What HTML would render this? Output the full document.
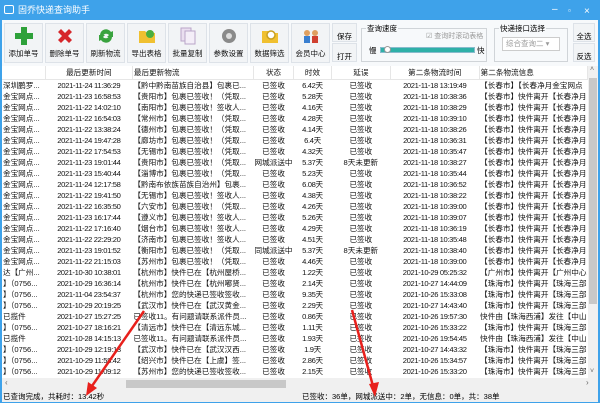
<!DOCTYPE html>
<html><head><meta charset="utf-8">
<style>
*{margin:0;padding:0;box-sizing:border-box}
body{width:600px;height:403px;overflow:hidden;background:#fff;font-family:"Liberation Sans","Noto Sans CJK SC",sans-serif;position:relative}
.title{position:absolute;left:0;top:0;width:600px;height:20px;background:#3ea2ea;color:#fff;font-size:9px;line-height:20px;padding-left:18px}
.title .ic{position:absolute;left:4px;top:5px;width:10px;height:9px;border:1.5px solid #fff;border-radius:2px}
.wb{position:absolute;top:3px;color:#fff;font-size:10px}
.frame{position:absolute;left:0;top:20px;width:600px;height:383px;border-left:2px solid #3ea2ea;border-right:2px solid #3ea2ea}
.tb{position:absolute;top:20px;left:2px;width:596px;height:46px;background:#f7f9fb}
.btn{position:absolute;top:23px;width:39px;height:40px;background:#f2f4f6;border:1px solid #dde2e8;font-size:7.5px;text-align:center;color:#111}
.btn .lb{position:absolute;bottom:3px;left:0;width:100%}
.btn svg{position:absolute;left:10px;top:3px}
.sb{position:absolute;left:332px;width:25px;height:19px;background:#f2f4f6;border:1px solid #dde2e8;font-size:7.5px;text-align:center;padding-top:7px}
.grp{position:absolute;border:1px solid #d0d4d8;font-size:7.5px}
.grp .gt{position:absolute;top:-6px;left:4px;background:#f7f9fb;padding:0 1px}
.grid{position:absolute;left:2px;top:66px;width:586px;height:312px;overflow:hidden;background:#fff}
table{border-collapse:collapse;table-layout:fixed;font-size:7.6px;color:#111;font-family:"Liberation Sans","Noto Sans CJK SC",sans-serif}
td,th{height:11px;line-height:11px;white-space:nowrap;overflow:hidden;padding:0 1px;font-weight:normal}
th{height:13px;border-right:1px solid #e6e6e6;border-bottom:1px solid #e6e6e6;background:#fff}
td.c{text-align:center}
.n{letter-spacing:-0.35px}
.vs{position:absolute;left:588px;top:66px;width:10px;height:312px;background:#f0f0f0}
.hs{position:absolute;left:2px;top:378px;width:596px;height:12px;background:#f0f0f0}
.status{position:absolute;left:0;top:390px;width:600px;height:13px;background:#f0f0f0;font-size:7.5px;line-height:13px;border-left:2px solid #3ea2ea;border-right:2px solid #3ea2ea;border-bottom:1px solid #3ea2ea}
</style></head><body>
<div class="title"><div class="ic"></div>固乔快递查询助手
<span class="wb" style="left:552px;top:0">–</span><span class="wb" style="left:568px;top:1px;font-size:8px">▫</span><span class="wb" style="left:584px;top:2px">×</span></div>
<div class="frame"></div>
<div class="tb"></div>

<div class="btn" style="left:4px"><svg width="18" height="18"><path d="M6 0h6v6h6v6h-6v6H6v-6H0V6h6z" fill="#2ea13a"/></svg><div class="lb">添加单号</div></div>
<div class="btn" style="left:45px"><svg width="18" height="18"><path d="M2 5l3-3 4 4 4-4 3 3-4 4 4 4-3 3-4-4-4 4-3-3 4-4z" fill="#d6262a"/></svg><div class="lb">删除单号</div></div>
<div class="btn" style="left:86px"><svg width="18" height="18"><path d="M3 8a6 6 0 0 1 11-3l2-1v6h-6l2-2a3.5 3.5 0 0 0-6 1z" fill="#3aa33f"/><path d="M15 10a6 6 0 0 1-11 3l-2 1V8h6l-2 2a3.5 3.5 0 0 0 6-1z" fill="#3aa33f"/></svg><div class="lb">刷新物流</div></div>
<div class="btn" style="left:127px"><svg width="18" height="18"><path d="M1 4h6l2 2h8v10H1z" fill="#f0c030"/><circle cx="12" cy="7" r="4" fill="#4bae3f"/></svg><div class="lb">导出表格</div></div>
<div class="btn" style="left:168px"><svg width="18" height="18"><rect x="2" y="1" width="10" height="13" fill="#eadff0" stroke="#b9a5c8"/><rect x="6" y="4" width="10" height="13" fill="#f4eef8" stroke="#b9a5c8"/></svg><div class="lb">批量复制</div></div>
<div class="btn" style="left:209px"><svg width="18" height="18"><circle cx="9" cy="9" r="7" fill="#8a8a8a"/><circle cx="9" cy="9" r="3" fill="#ddd"/></svg><div class="lb">参数设置</div></div>
<div class="btn" style="left:250px"><svg width="18" height="18"><path d="M1 4h6l2 2h8v10H1z" fill="#f0c030"/><circle cx="10" cy="8" r="4" fill="#fff" stroke="#c9a020" stroke-width="1.5"/></svg><div class="lb">数据筛选</div></div>
<div class="btn" style="left:291px"><svg width="18" height="18"><circle cx="5" cy="6" r="3" fill="#e0a060"/><rect x="2" y="9" width="6" height="7" fill="#3a7fd0"/><circle cx="13" cy="6" r="3" fill="#e0a060"/><rect x="10" y="9" width="6" height="7" fill="#d04030"/></svg><div class="lb">会员中心</div></div>

<div class="sb" style="top:23px">保存</div>
<div class="sb" style="top:43px">打开</div>

<div class="grp" style="left:361px;top:28px;width:126px;height:34px"><span class="gt">查询速度</span>
 <div style="position:absolute;left:8px;top:3px;width:8px;height:8px;border:1px solid #bbb;display:none"></div>
 <span style="position:absolute;left:64px;top:2px;color:#999;font-size:7px">☑ 查询时滚动表格</span>
 <span style="position:absolute;left:7px;top:16px">慢</span>
 <div style="position:absolute;left:18px;top:18px;width:95px;height:6px;background:#2fb0a8;border:1px solid #8bc"></div>
 <div style="position:absolute;left:22px;top:17px;width:7px;height:7px;border-radius:50%;background:#fff;border:1px solid #999"></div>
 <span style="position:absolute;left:115px;top:16px">快</span>
</div>
<div class="grp" style="left:494px;top:28px;width:74px;height:34px"><span class="gt">快递接口选择</span>
 <div style="position:absolute;left:7px;top:8px;width:58px;height:14px;border:1px solid #ccc;background:#fff;color:#999;font-size:7.5px;line-height:12px;padding-left:3px">综合查询二 ▾</div>
</div>
<div class="sb" style="left:573px;top:23px;width:22px">全选</div>
<div class="sb" style="left:573px;top:43px;width:22px">反选</div>

<div class="grid"><table>
<colgroup><col style="width:44px"><col style="width:90px"><col style="width:122px"><col style="width:38px"><col style="width:40px"><col style="width:62px"><col style="width:92px"><col style="width:98px"></colgroup>
<tr><th></th><th>最后更新时间</th><th style="text-align:left">最后更新物流</th><th>状态</th><th>时效</th><th>延误</th><th>第二条物流时间</th><th style="text-align:left">第二条物流信息</th></tr>
<tr><td>深圳鹏罗...</td><td class="c n">2021-11-24 11:36:29</td><td>【黔中黔南苗族自治县】包裹已...</td><td class="c">已签收</td><td class="c n">6.42天</td><td class="c">已签收</td><td class="c n">2021-11-18 13:19:49</td><td>【长春市】【长春净月金宝网点</td></tr>
<tr><td>金宝网点...</td><td class="c n">2021-11-23 16:58:53</td><td>【贵阳市】包裹已签收！（凭取...</td><td class="c">已签收</td><td class="c n">5.28天</td><td class="c">已签收</td><td class="c n">2021-11-18 10:38:36</td><td>【长春市】快件离开【长春净月</td></tr>
<tr><td>金宝网点...</td><td class="c n">2021-11-22 14:02:10</td><td>【南阳市】包裹已签收！签收人...</td><td class="c">已签收</td><td class="c n">4.16天</td><td class="c">已签收</td><td class="c n">2021-11-18 10:38:29</td><td>【长春市】快件离开【长春净月</td></tr>
<tr><td>金宝网点...</td><td class="c n">2021-11-22 16:54:03</td><td>【常州市】包裹已签收！（凭取...</td><td class="c">已签收</td><td class="c n">4.28天</td><td class="c">已签收</td><td class="c n">2021-11-18 10:39:10</td><td>【长春市】快件离开【长春净月</td></tr>
<tr><td>金宝网点...</td><td class="c n">2021-11-22 13:38:24</td><td>【德州市】包裹已签收！（凭取...</td><td class="c">已签收</td><td class="c n">4.14天</td><td class="c">已签收</td><td class="c n">2021-11-18 10:38:26</td><td>【长春市】快件离开【长春净月</td></tr>
<tr><td>金宝网点...</td><td class="c n">2021-11-24 19:47:28</td><td>【廊坊市】包裹已签收！（凭取...</td><td class="c">已签收</td><td class="c n">6.4天</td><td class="c">已签收</td><td class="c n">2021-11-18 10:36:31</td><td>【长春市】快件离开【长春净月</td></tr>
<tr><td>金宝网点...</td><td class="c n">2021-11-22 17:54:53</td><td>【无锡市】包裹已签收！（凭取...</td><td class="c">已签收</td><td class="c n">4.32天</td><td class="c">已签收</td><td class="c n">2021-11-18 10:35:47</td><td>【长春市】快件离开【长春净月</td></tr>
<tr><td>金宝网点...</td><td class="c n">2021-11-23 19:01:44</td><td>【贵阳市】包裹已签收！（凭取...</td><td class="c">网城派送中</td><td class="c n">5.37天</td><td class="c">8天未更新</td><td class="c n">2021-11-18 10:38:27</td><td>【长春市】快件离开【长春净月</td></tr>
<tr><td>金宝网点...</td><td class="c n">2021-11-23 15:40:44</td><td>【淄博市】包裹已签收！（凭取...</td><td class="c">已签收</td><td class="c n">5.23天</td><td class="c">已签收</td><td class="c n">2021-11-18 10:35:44</td><td>【长春市】快件离开【长春净月</td></tr>
<tr><td>金宝网点...</td><td class="c n">2021-11-24 12:17:58</td><td>【黔南布依族苗族自治州】包裹...</td><td class="c">已签收</td><td class="c n">6.08天</td><td class="c">已签收</td><td class="c n">2021-11-18 10:36:52</td><td>【长春市】快件离开【长春净月</td></tr>
<tr><td>金宝网点...</td><td class="c n">2021-11-22 19:41:50</td><td>【无锡市】包裹已签收！签收人...</td><td class="c">已签收</td><td class="c n">4.38天</td><td class="c">已签收</td><td class="c n">2021-11-18 10:38:22</td><td>【长春市】快件离开【长春净月</td></tr>
<tr><td>金宝网点...</td><td class="c n">2021-11-22 16:35:50</td><td>【六安市】包裹已签收！（凭取...</td><td class="c">已签收</td><td class="c n">4.26天</td><td class="c">已签收</td><td class="c n">2021-11-18 10:39:00</td><td>【长春市】快件离开【长春净月</td></tr>
<tr><td>金宝网点...</td><td class="c n">2021-11-23 16:17:44</td><td>【遵义市】包裹已签收！签收人...</td><td class="c">已签收</td><td class="c n">5.26天</td><td class="c">已签收</td><td class="c n">2021-11-18 10:39:07</td><td>【长春市】快件离开【长春净月</td></tr>
<tr><td>金宝网点...</td><td class="c n">2021-11-22 17:16:40</td><td>【烟台市】包裹已签收！签收人...</td><td class="c">已签收</td><td class="c n">4.29天</td><td class="c">已签收</td><td class="c n">2021-11-18 10:36:19</td><td>【长春市】快件离开【长春净月</td></tr>
<tr><td>金宝网点...</td><td class="c n">2021-11-22 22:29:20</td><td>【济南市】包裹已签收！签收人...</td><td class="c">已签收</td><td class="c n">4.51天</td><td class="c">已签收</td><td class="c n">2021-11-18 10:35:48</td><td>【长春市】快件离开【长春净月</td></tr>
<tr><td>金宝网点...</td><td class="c n">2021-11-23 19:01:52</td><td>【衡阳市】包裹已签收！（凭取...</td><td class="c">同城派送中</td><td class="c n">5.37天</td><td class="c">8天未更新</td><td class="c n">2021-11-18 10:38:40</td><td>【长春市】快件离开【长春净月</td></tr>
<tr><td>金宝网点...</td><td class="c n">2021-11-22 21:15:03</td><td>【苏州市】包裹已签收！（凭取...</td><td class="c">已签收</td><td class="c n">4.46天</td><td class="c">已签收</td><td class="c n">2021-11-18 10:39:00</td><td>【长春市】快件离开【长春净月</td></tr>
<tr><td>达【广州...</td><td class="c n">2021-10-30 10:38:01</td><td>【杭州市】快件已在【杭州屋桥...</td><td class="c">已签收</td><td class="c n">1.22天</td><td class="c">已签收</td><td class="c n">2021-10-29 05:25:32</td><td>【广州市】快件离开【广州中心</td></tr>
<tr><td>】（0756...</td><td class="c n">2021-10-29 16:36:14</td><td>【杭州市】快件已在【杭州嘟贤...</td><td class="c">已签收</td><td class="c n">2.14天</td><td class="c">已签收</td><td class="c n">2021-10-27 14:44:09</td><td>【珠海市】快件离开【珠海三部</td></tr>
<tr><td>】（0756...</td><td class="c n">2021-11-04 23:54:37</td><td>【杭州市】您的快递已签收签收...</td><td class="c">已签收</td><td class="c n">9.35天</td><td class="c">已签收</td><td class="c n">2021-10-26 15:33:08</td><td>【珠海市】快件离开【珠海三部</td></tr>
<tr><td>】（0756...</td><td class="c n">2021-10-29 20:19:25</td><td>【武汉市】快件已在【武汉黄金...</td><td class="c">已签收</td><td class="c n">2.29天</td><td class="c">已签收</td><td class="c n">2021-10-27 14:43:40</td><td>【珠海市】快件离开【珠海三部</td></tr>
<tr><td>已揽件</td><td class="c n">2021-10-27 15:27:25</td><td>已签收11。有问题请联系派件员...</td><td class="c">已签收</td><td class="c n">0.86天</td><td class="c">已签收</td><td class="c n">2021-10-26 19:57:30</td><td>快件由【珠海西浦】发往【中山</td></tr>
<tr><td>】（0756...</td><td class="c n">2021-10-27 18:16:21</td><td>【清远市】快件已在【清远东城...</td><td class="c">已签收</td><td class="c n">1.11天</td><td class="c">已签收</td><td class="c n">2021-10-26 15:33:22</td><td>【珠海市】快件离开【珠海三部</td></tr>
<tr><td>已揽件</td><td class="c n">2021-10-28 14:15:13</td><td>已签收11。有问题请联系派件员...</td><td class="c">已签收</td><td class="c n">1.93天</td><td class="c">已签收</td><td class="c n">2021-10-26 19:54:45</td><td>快件由【珠海西浦】发往【中山</td></tr>
<tr><td>】（0756...</td><td class="c n">2021-10-29 12:19:13</td><td>【武汉市】快件已在【武汉汉西...</td><td class="c">已签收</td><td class="c n">1.9天</td><td class="c">已签收</td><td class="c n">2021-10-27 14:43:32</td><td>【珠海市】快件离开【珠海三部</td></tr>
<tr><td>】（0756...</td><td class="c n">2021-10-29 11:58:42</td><td>【绍兴市】快件已在【上虞】签...</td><td class="c">已签收</td><td class="c n">2.86天</td><td class="c">已签收</td><td class="c n">2021-10-26 15:34:57</td><td>【珠海市】快件离开【珠海三部</td></tr>
<tr><td>】（0756...</td><td class="c n">2021-10-29 11:09:12</td><td>【苏州市】您的快递已签收签收...</td><td class="c">已签收</td><td class="c n">2.15天</td><td class="c">已签收</td><td class="c n">2021-10-26 15:33:20</td><td>【珠海市】快件离开【珠海三部</td></tr>
</table></div>

<div class="vs"><span style="position:absolute;left:2px;top:0;font-size:7px;color:#666">˄</span><div style="position:absolute;left:1px;top:12px;width:8px;height:226px;background:#c8c8c8"></div><span style="position:absolute;left:2px;top:302px;font-size:7px;color:#666">˅</span></div>
<div class="hs"><span style="position:absolute;left:3px;top:0;font-size:8px;color:#666">‹</span><div style="position:absolute;left:124px;top:2px;width:160px;height:8px;background:#c8c8c8"></div><span style="position:absolute;left:584px;top:0;font-size:8px;color:#666">›</span></div>
<div class="status"><span style="position:absolute;left:1px">已查询完成，共耗时：13.42秒</span><span style="position:absolute;left:300px">已签收：36单，网城派送中：2单，无信息：0单，共：38单</span></div>

<svg width="600" height="403" style="position:absolute;left:0;top:0;pointer-events:none">
<line x1="144" y1="311" x2="92" y2="386" stroke="#e8201c" stroke-width="2.5"/>
<path d="M86 396l2-14 9 6z" fill="#e8201c"/>
<line x1="352" y1="310" x2="373" y2="386" stroke="#e8201c" stroke-width="2.5"/>
<path d="M375 397l-6-13 10-2z" fill="#e8201c"/>
</svg>
</body></html>
